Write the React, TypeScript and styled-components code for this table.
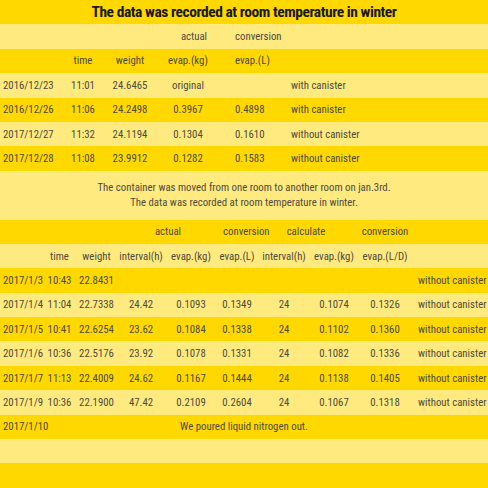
import React from "react";
import styled, { createGlobalStyle } from "styled-components";

const DARK = "#ffd800";
const LIGHT = "#ffea80";

const Global = createGlobalStyle`
  html, body { margin: 0; padding: 0; background: ${DARK}; }
  body { font-family: Roboto, "Liberation Sans", Arial, sans-serif; font-stretch: 75%; }
`;

const Page = styled.div`
  width: 488px;
  height: 488px;
  display: flex;
  flex-direction: column;
  overflow: hidden;
  color: #4f4b3c;
  font-size: 10.8px;
`;

const Title = styled.div`
  height: 24.4px;
  flex: none;
  background: ${DARK};
  display: flex;
  align-items: center;
  justify-content: center;
  font-family: Roboto, "Liberation Sans", sans-serif;
  font-stretch: 75%;
  font-weight: 700;
  font-size: 15.5px;
  letter-spacing: -0.45px;
  color: #1c1a10;
`;

const Row = styled.div<{ $light?: boolean; $cols: string }>`
  height: 24.4px;
  flex: none;
  background: ${(p) => (p.$light ? LIGHT : DARK)};
  display: grid;
  grid-template-columns: ${(p) => p.$cols};
  align-items: center;
  white-space: nowrap;
`;

const Cell = styled.div<{ $align?: "left" | "center"; $span?: number; $pad?: number }>`
  grid-column: span ${(p) => p.$span ?? 1};
  text-align: ${(p) => p.$align ?? "center"};
  padding-left: ${(p) => p.$pad ?? 0}px;
  overflow: visible;
`;

const Note = styled.div`
  height: 48.8px;
  flex: none;
  background: ${LIGHT};
  display: flex;
  flex-direction: column;
  align-items: center;
  justify-content: center;
  line-height: 15px;
`;

const SpanRow = styled.div<{ $light?: boolean }>`
  height: 24.4px;
  flex: none;
  background: ${(p) => (p.$light ? LIGHT : DARK)};
  display: grid;
  grid-template-columns: 1fr auto 1fr;
  align-items: center;
  white-space: nowrap;
`;

const COLS1 = "60px 46px 48px 68px 69px 1fr";
const COLS2 = "44px 31px 43px 46px 54px 38px 56px 44px 58px 1fr";

const t1 = [
  ["2016/12/23", "11:01", "24.6465", "original", "", "with canister"],
  ["2016/12/26", "11:06", "24.2498", "0.3967", "0.4898", "with canister"],
  ["2017/12/27", "11:32", "24.1194", "0.1304", "0.1610", "without canister"],
  ["2017/12/28", "11:08", "23.9912", "0.1282", "0.1583", "without canister"],
];

const t2 = [
  ["2017/1/3", "10:43", "22.8431", "", "", "", "", "", "", "without canister"],
  ["2017/1/4", "11:04", "22.7338", "24.42", "0.1093", "0.1349", "24", "0.1074", "0.1326", "without canister"],
  ["2017/1/5", "10:41", "22.6254", "23.62", "0.1084", "0.1338", "24", "0.1102", "0.1360", "without canister"],
  ["2017/1/6", "10:36", "22.5176", "23.92", "0.1078", "0.1331", "24", "0.1082", "0.1336", "without canister"],
  ["2017/1/7", "11:13", "22.4009", "24.62", "0.1167", "0.1444", "24", "0.1138", "0.1405", "without canister"],
  ["2017/1/9", "10:36", "22.1900", "47.42", "0.2109", "0.2604", "24", "0.1067", "0.1318", "without canister"],
];

export default function App() {
  return (
    <Page>
      <Global />
      <Title>The data was recorded at room temperature in winter</Title>

      <Row $light $cols={COLS1}>
        <Cell />
        <Cell />
        <Cell />
        <Cell $pad={12}>actual</Cell>
        <Cell $align="left" $pad={13}>conversion</Cell>
        <Cell />
      </Row>
      <Row $cols={COLS1}>
        <Cell />
        <Cell>time</Cell>
        <Cell>weight</Cell>
        <Cell>evap.(kg)</Cell>
        <Cell $align="left" $pad={13}>evap.(L)</Cell>
        <Cell />
      </Row>
      {t1.map((r, i) => (
        <Row key={r[0]} $light={i % 2 === 0} $cols={COLS1}>
          <Cell $align="left" $pad={3}>{r[0]}</Cell>
          <Cell>{r[1]}</Cell>
          <Cell>{r[2]}</Cell>
          <Cell>{r[3]}</Cell>
          <Cell $align="left" $pad={13}>{r[4]}</Cell>
          <Cell $align="left">{r[5]}</Cell>
        </Row>
      ))}

      <Note>
        <div>The container was moved from one room to another room on jan.3rd.</div>
        <div>The data was recorded at room temperature in winter.</div>
      </Note>

      <Row $cols={COLS2}>
        <Cell />
        <Cell />
        <Cell />
        <Cell $span={2}>actual</Cell>
        <Cell $pad={5}>conversion</Cell>
        <Cell $span={2}>calculate</Cell>
        <Cell>conversion</Cell>
        <Cell />
      </Row>
      <Row $light $cols={COLS2}>
        <Cell />
        <Cell>time</Cell>
        <Cell>weight</Cell>
        <Cell>interval(h)</Cell>
        <Cell>evap.(kg)</Cell>
        <Cell>evap.(L)</Cell>
        <Cell>interval(h)</Cell>
        <Cell>evap.(kg)</Cell>
        <Cell>evap.(L/D)</Cell>
        <Cell />
      </Row>
      {t2.map((r, i) => (
        <Row key={r[0]} $light={i % 2 === 1} $cols={COLS2}>
          <Cell $align="left" $pad={3}>{r[0]}</Cell>
          {r.slice(1, 9).map((v, j) => (
            <Cell key={j}>{v}</Cell>
          ))}
          <Cell $align="left" $pad={4}>{r[9]}</Cell>
        </Row>
      ))}
      <SpanRow>
        <Cell $align="left" $pad={3}>2017/1/10</Cell>
        <Cell>We poured liquid nitrogen out.</Cell>
        <Cell />
      </SpanRow>
      <SpanRow $light />
      <SpanRow />
    </Page>
  );
}
